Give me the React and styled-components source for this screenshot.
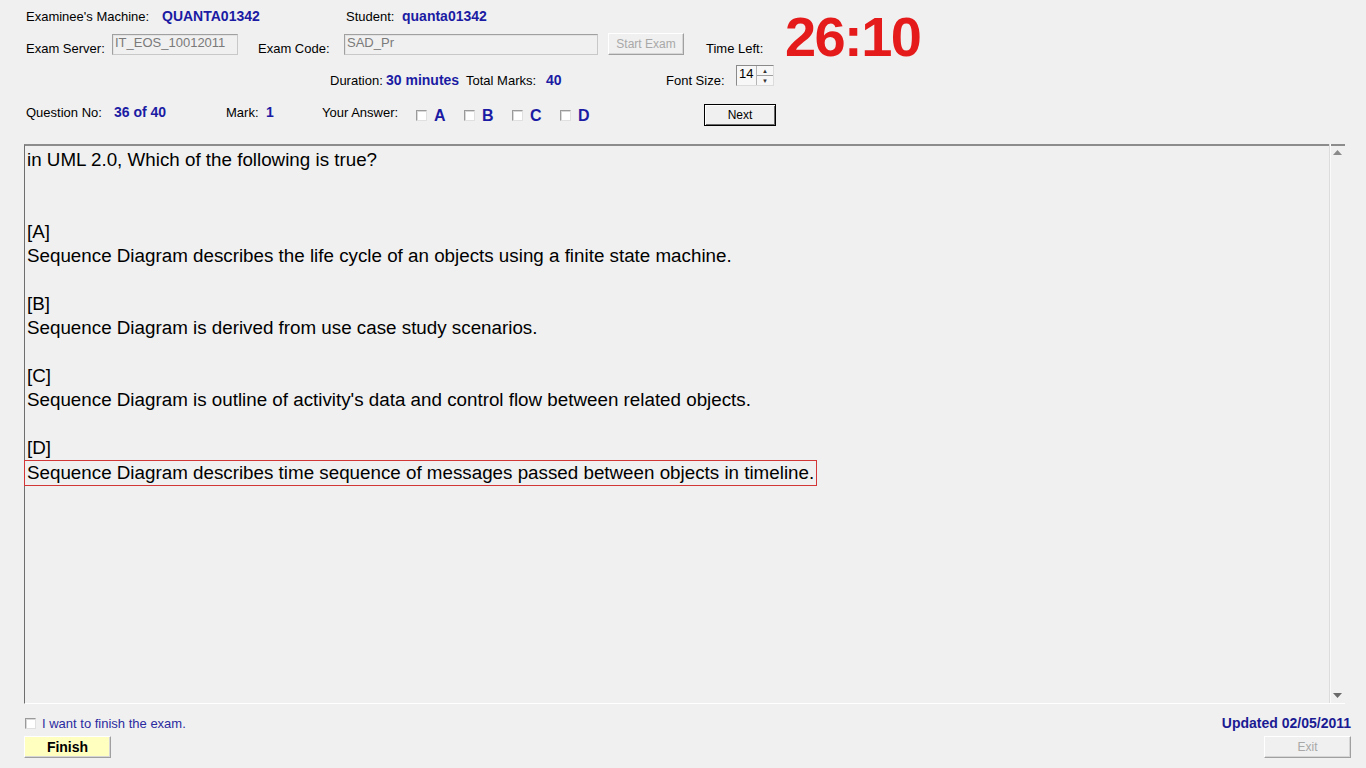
import React from "react";
import styled, { createGlobalStyle } from "styled-components";

const Global = createGlobalStyle`
  html, body { margin: 0; padding: 0; background: #f0f0f0; }
  body { font-family: "Liberation Sans", Arial, sans-serif; font-size: 13px; color: #000; }
`;

const Page = styled.div`
  width: 1366px;
  height: 768px;
  overflow: hidden;
  box-sizing: border-box;
  padding: 9px 15px 0 24px;
  display: flex;
  flex-direction: column;
`;

const Header = styled.div`
  display: grid;
  grid-template-columns: 761px 1fr;
  grid-template-rows: auto auto auto auto;
`;

const Row = styled.div`
  display: flex;
  align-items: flex-start;
  height: ${(p) => p.h || 22}px;
  margin-top: ${(p) => p.mt || 0}px;
  grid-column: 1;
`;

const Label = styled.span`
  display: block;
  box-sizing: border-box;
  width: ${(p) => (p.w ? p.w + "px" : "auto")};
  margin-left: ${(p) => p.ml || 0}px;
  padding-top: ${(p) => p.pt || 0}px;
  line-height: 15px;
  white-space: nowrap;
  flex-shrink: 0;
`;

const Value = styled(Label)`
  font-weight: bold;
  font-size: 14px;
  color: #1b1ba3;
`;

const Input = styled.div`
  box-sizing: border-box;
  width: ${(p) => p.w}px;
  height: 21px;
  margin-left: ${(p) => p.ml || 0}px;
  margin-top: 1px;
  border: 1px solid #c8c8c8;
  border-top-color: #a0a0a0;
  border-left-color: #a0a0a0;
  box-shadow: inset 1px 1px 0 #e3e3e3;
  background: #f0f0f0;
  color: #7a7a7a;
  line-height: 15px;
  padding: 0 2px;
  flex-shrink: 0;
`;

const Button = styled.button`
  box-sizing: border-box;
  width: ${(p) => p.w}px;
  height: 22px;
  margin-left: ${(p) => p.ml || 0}px;
  padding: 0;
  font-family: "Liberation Sans", Arial, sans-serif;
  font-size: ${(p) => (p.bold ? 14 : 12)}px;
  font-weight: ${(p) => (p.bold ? "bold" : "normal")};
  color: ${(p) => (p.disabled ? "#a8a8a8" : "#000")};
  background: ${(p) => p.bg || "#f0f0f0"};
  border: 1px solid ${(p) => (p.dark ? "#000" : "#fff")};
  border-right-color: ${(p) => (p.dark ? "#000" : "#a0a0a0")};
  border-bottom-color: ${(p) => (p.dark ? "#000" : "#a0a0a0")};
  box-shadow: ${(p) =>
    p.dark
      ? "inset 1px 1px 0 #fff, inset -1px -1px 0 #696969"
      : "inset -1px -1px 0 #d6d6d6"};
  flex-shrink: 0;
`;

const Timer = styled.div`
  grid-column: 2;
  grid-row: 1 / 4;
  font-weight: bold;
  font-size: 56px;
  letter-spacing: -1.6px;
  line-height: 56px;
  color: #e51a1a;
  margin-top: 0;
  margin-left: 0;
  white-space: nowrap;
`;

const Spin = styled.div`
  box-sizing: border-box;
  width: 38px;
  height: 21px;
  margin-left: ${(p) => p.ml || 0}px;
  border: 1px solid #dcdcdc;
  border-top-color: #8a8a8a;
  border-left-color: #8a8a8a;
  background: #f7f7f7;
  display: flex;
  justify-content: space-between;
  flex-shrink: 0;
`;

const SpinText = styled.span`
  line-height: 15px;
  padding-left: 2px;
`;

const SpinButtons = styled.div`
  width: 16px;
  display: flex;
  flex-direction: column;
  border-left: 1px solid #b5b5b5;
`;

const SpinBtn = styled.div`
  flex: 1;
  display: flex;
  align-items: center;
  justify-content: center;
  border-bottom: ${(p) => (p.top ? "1px solid #a0a0a0" : "none")};
  font-size: 6px;
  color: #333;
  line-height: 1;
`;

const Check = styled.span`
  display: inline-block;
  box-sizing: border-box;
  width: 11px;
  height: 11px;
  margin-left: ${(p) => p.ml || 0}px;
  margin-top: ${(p) => p.mt || 0}px;
  border: 1px solid #9a9a9a;
  border-right-color: #e0e0e0;
  border-bottom-color: #e0e0e0;
  background: #fff;
  box-shadow: inset 1px 1px 0 #d8d8d8;
  flex-shrink: 0;
`;

const Letter = styled.span`
  display: block;
  font-weight: bold;
  font-size: 16px;
  color: #1b1ba3;
  margin-left: 7px;
  line-height: 18px;
  margin-top: 3px;
  width: 30px;
  flex-shrink: 0;
`;

const TextArea = styled.div`
  margin-top: 18px;
  margin-right: 6px;
  height: 560px;
  box-sizing: border-box;
  border-top: 2px solid #8c8c8c;
  border-left: 1px solid #6e6e6e;
  border-bottom: 1px solid #fff;
  display: flex;
  flex-shrink: 0;
`;

const Content = styled.div`
  flex: 1;
  padding: 2px 0 0 2px;
  font-size: 18.8px;
  line-height: 24px;
  white-space: pre;
`;

const Line = styled.div`
  height: 24px;
`;

const Selected = styled.span`
  display: inline-block;
  margin-left: -3px;
  padding: 0 2px 0 2px;
  border: 1px solid #d23636;
  line-height: 24px;
`;

const ScrollBar = styled.div`
  width: 15px;
  border-left: 1px solid #dcdcdc;
  box-shadow: inset 1px 0 0 #fafafa;
  display: flex;
  flex-direction: column;
  justify-content: space-between;
  align-items: center;
  padding: 6px 0 5px;
  margin-top: -2px;
`;

const Arrow = styled.svg`
  width: 9px;
  height: 5px;
`;

const Footer = styled.div`
  display: flex;
  justify-content: space-between;
  margin-top: 11px;
`;

const FooterCol = styled.div`
  display: flex;
  flex-direction: column;
  align-items: ${(p) => (p.right ? "flex-end" : "flex-start")};
  gap: 5px;
`;

const FinishLine = styled.div`
  display: flex;
  align-items: center;
  height: 16px;
  margin-left: 1px;
`;

const FinishText = styled.span`
  color: #2b2ba0;
  margin-left: 6px;
  line-height: 15px;
`;

const Updated = styled.span`
  font-weight: bold;
  font-size: 14px;
  color: #1b1b93;
  line-height: 16px;
`;

const lines = [
  "in UML 2.0, Which of the following is true?",
  "",
  "",
  "[A]",
  "Sequence Diagram describes the life cycle of an objects using a finite state machine.",
  "",
  "[B]",
  "Sequence Diagram is derived from use case study scenarios.",
  "",
  "[C]",
  "Sequence Diagram is outline of activity's data and control flow between related objects.",
  "",
  "[D]",
];

export default function App() {
  return (
    <Page>
      <Global />
      <Header>
        <Row h={16}>
          <Label w={136} ml={2}>Examinee's Machine:</Label>
          <Value w={184}>QUANTA01342</Value>
          <Label w={56}>Student:</Label>
          <Value>quanta01342</Value>
        </Row>
        <Row mt={8}>
          <Label w={86} ml={2} pt={8}>Exam Server:</Label>
          <Input w={126}>IT_EOS_10012011</Input>
          <Label w={86} ml={20} pt={8}>Exam Code:</Label>
          <Input w={254}>SAD_Pr</Input>
          <Button w={76} ml={10} disabled>Start Exam</Button>
          <Label ml={22} pt={8}>Time Left:</Label>
        </Row>
        <Row mt={10}>
          <Label w={56} ml={306} pt={8}>Duration:</Label>
          <Value w={80} pt={8}>30 minutes</Value>
          <Label w={80} pt={8}>Total Marks:</Label>
          <Value w={120} pt={8}>40</Value>
          <Label w={70} pt={8}>Font Size:</Label>
          <Spin>
            <SpinText>14</SpinText>
            <SpinButtons>
              <SpinBtn top>▲</SpinBtn>
              <SpinBtn>▼</SpinBtn>
            </SpinButtons>
          </Spin>
        </Row>
        <Row mt={17}>
          <Label w={88} ml={2} pt={1}>Question No:</Label>
          <Value w={112} pt={1}>36 of 40</Value>
          <Label w={40} pt={1}>Mark:</Label>
          <Value w={56} pt={1}>1</Value>
          <Label w={94} pt={1}>Your Answer:</Label>
          <Check mt={6} />
          <Letter>A</Letter>
          <Check mt={6} />
          <Letter>B</Letter>
          <Check mt={6} />
          <Letter>C</Letter>
          <Check mt={6} />
          <Letter>D</Letter>
          <Button w={72} ml={96} dark>Next</Button>
        </Row>
        <Timer>26:10</Timer>
      </Header>

      <TextArea>
        <Content>
          {lines.map((l, i) => (
            <Line key={i}>{l}</Line>
          ))}
          <Line>
            <Selected>
              Sequence Diagram describes time sequence of messages passed between objects in timeline.
            </Selected>
          </Line>
        </Content>
        <ScrollBar>
          <Arrow viewBox="0 0 9 5">
            <path d="M0 5 L4.5 0 L9 5 Z" fill="#8a8a8a" />
          </Arrow>
          <Arrow viewBox="0 0 9 5">
            <path d="M0 0 L4.5 5 L9 0 Z" fill="#6a6a6a" />
          </Arrow>
        </ScrollBar>
      </TextArea>

      <Footer>
        <FooterCol>
          <FinishLine>
            <Check />
            <FinishText>I want to finish the exam.</FinishText>
          </FinishLine>
          <Button w={87} bg="#ffffc0" bold>Finish</Button>
        </FooterCol>
        <FooterCol right>
          <Updated>Updated 02/05/2011</Updated>
          <Button w={87} disabled>Exit</Button>
        </FooterCol>
      </Footer>
    </Page>
  );
}
